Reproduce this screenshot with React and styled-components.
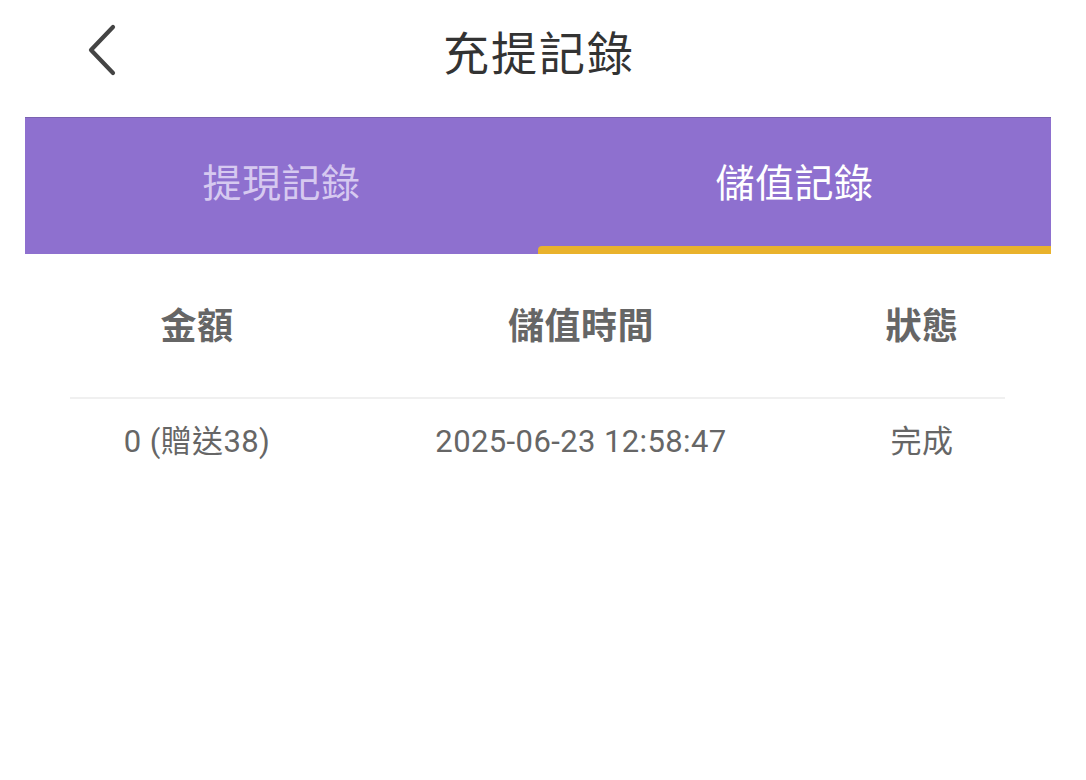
import React, { useState } from "react";
import styled, { createGlobalStyle } from "styled-components";

const Global = createGlobalStyle`
  html, body { margin: 0; padding: 0; background: #fff; }
  body { font-family: Roboto, "Noto Sans CJK TC", "Noto Sans", sans-serif; }
`;

const Page = styled.div`
  width: 1086px;
  height: 780px;
  background: #fff;
  display: flex;
  flex-direction: column;
`;

const Header = styled.header`
  height: 102px;
  display: grid;
  grid-template-columns: 80px 1fr 80px;
  align-items: center;
  padding: 0 25px;
  box-sizing: border-box;
  margin-bottom: 15px;
`;

const BackButton = styled.button`
  border: 0;
  background: none;
  padding: 0;
  margin-left: 61px;
  margin-top: -2px;
  width: 34px;
  height: 54px;
  display: flex;
  align-items: center;
  justify-content: center;
  cursor: pointer;
`;

const Title = styled.h1`
  margin: 0;
  text-align: center;
  font-family: "Noto Sans CJK TC", sans-serif;
  font-weight: 400;
  font-size: 46px;
  color: #333;
  letter-spacing: 2px;
  margin-top: -2px;
  margin-left: -8px;
`;

const Content = styled.div`
  margin: 0 35px 0 25px;
  display: flex;
  flex-direction: column;
`;

const TabBar = styled.div`
  display: grid;
  grid-template-columns: 1fr 1fr;
  background: #8e70cf;
  border-top: 1px solid #7a62b0;
  height: 136px;
`;

const Tab = styled.button`
  border: 0;
  background: none;
  padding: 0;
  position: relative;
  font-family: "Noto Sans CJK TC", sans-serif;
  font-size: 39px;
  font-weight: 400;
  letter-spacing: 0.5px;
  color: ${(p) => (p.$active ? "#ffffff" : "#d6c9f0")};
  display: flex;
  align-items: center;
  justify-content: center;
  padding-bottom: 12px;
  cursor: pointer;
`;

const Indicator = styled.span`
  position: absolute;
  left: 0;
  right: 0;
  bottom: 0;
  height: 8px;
  background: #e9b22c;
  border-top-left-radius: 4px;
`;

const Row = styled.div`
  display: grid;
  grid-template-columns: 344px 424px 258px;
  align-items: center;
  height: ${(p) => p.$h}px;
`;

const HeadCell = styled.div`
  text-align: center;
  font-family: "Noto Sans CJK TC", sans-serif;
  font-weight: 700;
  font-size: 36px;
  line-height: 44px;
  letter-spacing: 0.5px;
  color: #666;
  margin-bottom: 6px;
`;

const Cell = styled.div`
  text-align: center;
  font-family: Roboto, "Noto Sans CJK TC", sans-serif;
  font-size: 31px;
  line-height: 40px;
  letter-spacing: 0.4px;
  color: #666;
  margin-bottom: 2px;
`;

const Divider = styled.div`
  height: 2px;
  background: #f0f0f0;
  margin: 0 46px 0 45px;
`;

function Chevron() {
  return (
    <svg width="34" height="54" viewBox="0 0 34 54" fill="none">
      <path d="M27 4 L5 27 L27 50" stroke="#444" strokeWidth="4.2" strokeLinecap="round" strokeLinejoin="round" />
    </svg>
  );
}

export default function App() {
  const [tab, setTab] = useState(1);
  const tabs = ["提現記錄", "儲值記錄"];
  return (
    <Page>
      <Global />
      <Header>
        <BackButton aria-label="back">
          <Chevron />
        </BackButton>
        <Title>充提記錄</Title>
        <div />
      </Header>
      <Content>
        <TabBar>
          {tabs.map((t, i) => (
            <Tab key={t} $active={tab === i} onClick={() => setTab(i)}>
              {t}
              {tab === i && <Indicator />}
            </Tab>
          ))}
        </TabBar>
        <Row $h={143}>
          <HeadCell>金額</HeadCell>
          <HeadCell>儲值時間</HeadCell>
          <HeadCell>狀態</HeadCell>
        </Row>
        <Divider />
        <Row $h={88}>
          <Cell>0 (贈送38)</Cell>
          <Cell>2025-06-23 12:58:47</Cell>
          <Cell>完成</Cell>
        </Row>
      </Content>
    </Page>
  );
}
